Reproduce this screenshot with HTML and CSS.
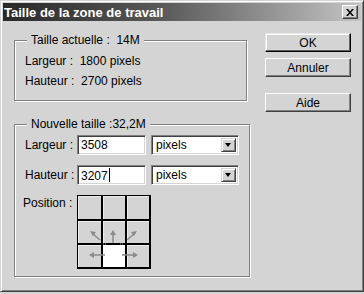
FILE: index.html
```html
<!DOCTYPE html>
<html lang="fr">
  <head>
    <meta charset="UTF-8" />
    <title>Taille de la zone de travail</title>
    <link rel="stylesheet" href="styles.css">
  </head>
  <body>
    <div class="dialog">
      <div class="titlebar">
        <span class="title">Taille de la zone de travail</span>
        <span class="close">
          <svg width="8" height="7" viewBox="0 0 8 7">
            <path d="M0 0h2l2 2.5 2-2.5h2l-3 3.5 3 3.5h-2l-2-2.5-2 2.5h-2l3-3.5z" fill="#000"/>
          </svg>
        </span>
      </div>
      <div class="content">
        <div class="main">
          <fieldset class="group current">
            <legend>Taille actuelle :&nbsp; 14M</legend>
            <div class="info">Largeur :&nbsp; 1800 pixels</div>
            <div class="info">Hauteur :&nbsp; 2700 pixels</div>
          </fieldset>
          <fieldset class="group newsize">
            <legend>Nouvelle taille :32,2M</legend>
            <div class="field">
              <label>Largeur :</label>
              <div class="textbox">3508</div>
              <div class="select"><span>pixels</span><span class="drop"></span></div>
            </div>
            <div class="field">
              <label>Hauteur :</label>
              <div class="textbox">3207<span class="caret"></span></div>
              <div class="select"><span>pixels</span><span class="drop"></span></div>
            </div>
            <div class="field position">
              <label>Position :</label>
              <div class="anchor">
                <span></span><span></span><span></span>
                <span></span><span></span><span></span>
                <span></span><span class="on"></span><span></span>
                <svg class="arrows" width="73" height="73" viewBox="0 0 73 73">
                  <g stroke="#8a8a8a" stroke-width="1.5" fill="none">
                    <path d="M36 48V39"/>
                    <path d="M23 45L16 39"/>
                    <path d="M50 45L57 39"/>
                    <path d="M28 60H16"/>
                    <path d="M45 60H57"/>
                  </g>
                  <g fill="#8a8a8a">
                    <path d="M36 35l-3 5h6z"/>
                    <path d="M13 36l6 1-3 4z"/>
                    <path d="M60 36l-6 1 3 4z"/>
                    <path d="M12 60l5-3v6z"/>
                    <path d="M61 60l-5-3v6z"/>
                  </g>
                  <g stroke="#9a9a9a" stroke-width="1" stroke-dasharray="1 1">
                    <path d="M26 49h4M43 49h4"/>
                  </g>
                </svg>
              </div>
            </div>
          </fieldset>
        </div>
        <div class="buttons">
          <button class="btn default">OK</button>
          <button class="btn">Annuler</button>
          <button class="btn help">Aide</button>
        </div>
      </div>
    </div>
  </body>
</html>
```

FILE: styles.css
```css
* {
  box-sizing: border-box;
}
body {
  margin: 0;
  background: #d4d4d4;
  font-family: "Liberation Sans", Arial, sans-serif;
  font-size: 12px;
  color: #000;
}
.dialog {
  width: 364px;
  height: 292px;
  padding: 2px;
  background: #d4d4d4;
  border: 1px solid;
  border-color: #d4d4d4 #404040 #404040 #d4d4d4;
  box-shadow: inset 1px 1px #fff, inset -1px -1px #808080;
}
.titlebar {
  height: 18px;
  display: flex;
  align-items: center;
  justify-content: space-between;
  padding: 0 3px 0 1px;
  background: linear-gradient(to right, #282828, #5a5a5a 45%, #c4c4c4);
}
.title {
  color: #fff;
  font-weight: bold;
  font-size: 13px;
}
.close {
  width: 16px;
  height: 14px;
  display: flex;
  align-items: center;
  justify-content: center;
  background: #d4d4d4;
  border: 1px solid;
  border-color: #fff #404040 #404040 #fff;
  box-shadow: inset -1px -1px #808080;
}
.content {
  display: flex;
  padding: 12px 0 0 11px;
}
.main {
  width: 233px;
}
.group {
  margin: 0;
  padding: 4px 10px 9px;
  border: 1px solid #808080;
  box-shadow: inset 1px 1px #fff, 1px 1px #fff;
}
.group legend {
  margin-left: 2px;
  padding: 0 4px;
  line-height: 14px;
  background: #d4d4d4;
}
.info {
  height: 20px;
  line-height: 20px;
}
.newsize {
  margin-top: 16px;
  padding-bottom: 8px;
}
.field {
  display: flex;
  align-items: center;
  height: 20px;
  margin-bottom: 10px;
}
.field label {
  width: 52px;
}
.textbox,
.select {
  height: 20px;
  background: #fff;
  border: 1px solid;
  border-color: #808080 #fff #fff #808080;
  box-shadow: inset 1px 1px #404040, inset -1px -1px #d4d4d4;
  padding: 2px 0 0 3px;
  line-height: 15px;
}
.textbox {
  width: 69px;
}
.caret {
  display: inline-block;
  width: 1px;
  height: 14px;
  margin-left: 1px;
  vertical-align: -2px;
  background: #000;
}
.select {
  width: 88px;
  margin-left: 5px;
  display: flex;
  justify-content: space-between;
  padding: 2px 2px 2px 4px;
}
.drop {
  width: 15px;
  height: 14px;
  background: #d4d4d4;
  border: 1px solid;
  border-color: #d4d4d4 #404040 #404040 #d4d4d4;
  box-shadow: inset 1px 1px #fff, inset -1px -1px #808080;
  position: relative;
}
.drop::after {
  content: "";
  position: absolute;
  left: 3px;
  top: 4px;
  border: 3.5px solid transparent;
  border-top: 4px solid #000;
  border-bottom: 0;
}
.position {
  height: 73px;
  align-items: flex-start;
  margin-bottom: 0;
}
.position label {
  margin-top: 1px;
  margin-left: -2px;
  width: 54px;
}
.anchor {
  position: relative;
  display: grid;
  grid-template-columns: 23px 22px 22px;
  grid-template-rows: 23px 22px 22px;
  gap: 2px;
  padding: 0 1px 1px 0;
  border: 1px solid #000;
  background: #000;
}
.anchor span {
  background: #d4d4d4;
  box-shadow: inset 1px 1px #ececec;
}
.anchor .on {
  background: #fff;
  box-shadow: none;
}
.arrows {
  position: absolute;
  left: -1px;
  top: -1px;
}
.buttons {
  display: flex;
  flex-direction: column;
  margin-left: 18px;
}
.btn {
  width: 86px;
  height: 19px;
  margin: 0 0 6px;
  padding: 0;
  font: inherit;
  color: #000;
  background: #d4d4d4;
  border: 1px solid;
  border-color: #fff #404040 #404040 #fff;
  box-shadow: inset -1px -1px #808080;
}
.btn.default {
  border-color: #e8e8e8 #000 #000 #e8e8e8;
  box-shadow: inset -1px -1px #606060, inset 1px 1px #fff;
}
.btn.help {
  margin-top: 10px;
}
```
